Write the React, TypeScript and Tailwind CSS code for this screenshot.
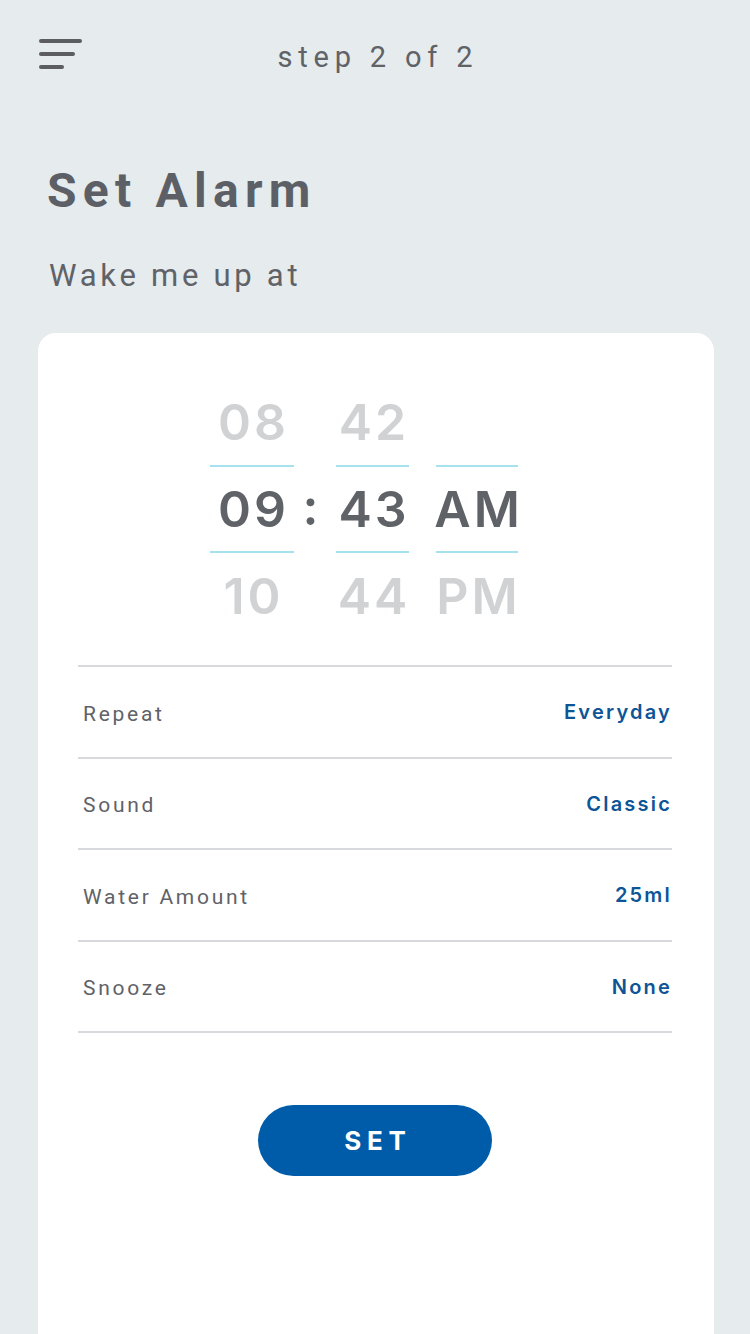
import React from 'react';

const settings = [
  { label: 'Repeat', value: 'Everyday' },
  { label: 'Sound', value: 'Classic' },
  { label: 'Water Amount', value: '25ml' },
  { label: 'Snooze', value: 'None' },
];

function PickerColumn({ top, mid, bottom, width }: { top: string; mid: string; bottom: string; width: string }) {
  return (
    <div className={`flex flex-col items-center ${width}`}>
      <div className="h-[86px] flex items-center justify-center pl-[3px] text-[#d1d2d4]">{top}</div>
      <div className="h-[2px] w-full bg-[#a6e2ed]" />
      <div className="h-[84px] flex items-center justify-center pl-[3px] text-[#5f6267]">{mid}</div>
      <div className="h-[2px] w-full bg-[#a6e2ed]" />
      <div className="h-[86px] flex items-center justify-center pl-[3px] text-[#d1d2d4]">{bottom}</div>
    </div>
  );
}

export default function App() {
  return (
    <div className="h-[1334px] w-[750px] overflow-hidden bg-[#e6ebee] flex flex-col font-['Roboto',sans-serif] text-[#5f6267]">
      {/* Header */}
      <div className="pt-[39px] px-[39px] grid grid-cols-[1fr_auto_1fr] h-[75px]">
        <svg width="44" height="30" viewBox="0 0 44 30" className="self-start">
          <g stroke="#5b5d60" strokeWidth="4" strokeLinecap="round">
            <line x1="2" y1="2" x2="41" y2="2" />
            <line x1="2" y1="15" x2="34" y2="15" />
            <line x1="2" y1="28" x2="23" y2="28" />
          </g>
        </svg>
        <div className="h-[36px] flex items-center text-[29px] leading-none tracking-[0.2em] pl-[0.2em]">step 2 of 2</div>
        <div />
      </div>

      {/* Title */}
      <h1 className="mt-[92px] ml-[47px] text-[48px] leading-none font-bold tracking-[0.13em] text-[#5c6066]">Set Alarm</h1>
      <p className="mt-[45px] ml-[49px] text-[31px] leading-none tracking-[0.12em]">Wake me up at</p>

      {/* Card */}
      <div className="mt-[42px] ml-[38px] mr-[36px] flex-1 bg-white rounded-t-[18px] pt-[46px] pl-[40px] pr-[42px]">
        <div className="flex font-['Inter',sans-serif] font-semibold text-[50px] leading-none tracking-[0.06em] pl-[132px]">
          <PickerColumn top="08" mid="09" bottom="10" width="w-[84px]" />
          <div className="w-[42px] h-[260px] flex items-center justify-center text-[#5f6267] pb-[4px] pr-[6px]">:</div>
          <PickerColumn top="42" mid="43" bottom="44" width="w-[73px]" />
          <div className="w-[27px]" />
          <PickerColumn top="" mid="AM" bottom="PM" width="w-[82px]" />
        </div>

        <div className="mt-[26px] border-t-2 border-[#d8d9dc]">
          {settings.map((s) => (
            <div key={s.label} className="h-[91.5px] border-b-2 border-[#d8d9dc] flex items-center justify-between pl-[5px]">
              <span className="pt-[5px] text-[21px] tracking-[0.13em] text-[#5f6267]">{s.label}</span>
              <span className="pt-[1px] font-['Inter',sans-serif] font-semibold text-[20px] tracking-[0.11em] text-[#0d5597]">{s.value}</span>
            </div>
          ))}
        </div>

        <div className="flex justify-center mt-[72px]">
          <button className="w-[234px] h-[71px] rounded-full bg-[#005ca8] text-white font-['Inter',sans-serif] font-bold text-[26px] tracking-[0.22em] pl-[0.22em]">
            SET
          </button>
        </div>
      </div>
    </div>
  );
}
